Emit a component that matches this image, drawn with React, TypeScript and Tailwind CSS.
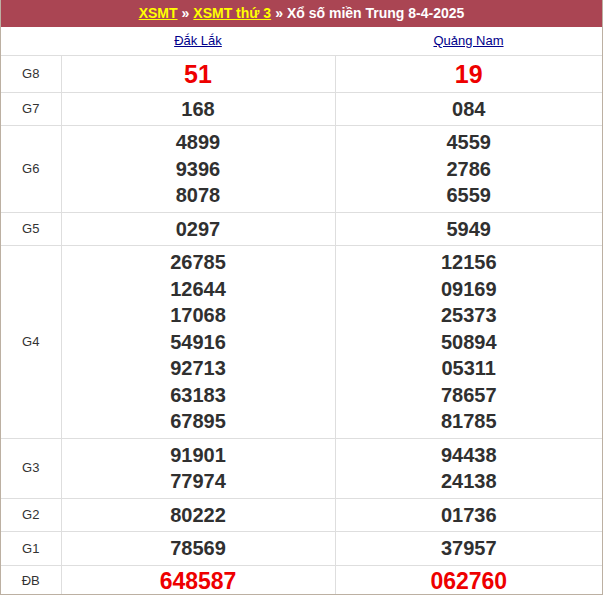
const rows: { g: string; a: string[]; b: string[]; red?: boolean; size?: string }[] = [
  { g: "G8", a: ["51"], b: ["19"], red: true, size: "text-[25px] leading-[30px] py-[3px]" },
  { g: "G7", a: ["168"], b: ["084"] },
  { g: "G6", a: ["4899", "9396", "8078"], b: ["4559", "2786", "6559"] },
  { g: "G5", a: ["0297"], b: ["5949"] },
  {
    g: "G4",
    a: ["26785", "12644", "17068", "54916", "92713", "63183", "67895"],
    b: ["12156", "09169", "25373", "50894", "05311", "78657", "81785"],
  },
  { g: "G3", a: ["91901", "77974"], b: ["94438", "24138"] },
  { g: "G2", a: ["80222"], b: ["01736"] },
  { g: "G1", a: ["78569"], b: ["37957"] },
  { g: "ĐB", a: ["648587"], b: ["062760"], red: true, size: "text-[23px] leading-[26px] py-[2px]" },
];

export default function App() {
  return (
    <div className="w-[603px] h-[595px] bg-white font-[Liberation_Sans,Arial,sans-serif] border-x border-b border-[#bcb0a2] overflow-hidden">
      <div className="h-[27px] bg-[#aa4553] flex items-center justify-center text-white font-bold text-[14px]">
        <span className="text-[#ffff00] underline">XSMT</span>
        <span className="mx-1">»</span>
        <span className="text-[#ffff00] underline">XSMT thứ 3</span>
        <span className="mx-1">»</span>
        <span>Xổ số miền Trung 8-4-2025</span>
      </div>
      <table className="w-full border-collapse table-fixed">
        <colgroup>
          <col className="w-[60px]" />
          <col className="w-[274px]" />
          <col />
        </colgroup>
        <tbody>
          <tr className="h-[28px] border-b border-[#dedede]">
            <td></td>
            <td className="text-center text-[13px] text-[#00008b] underline">Đắk Lắk</td>
            <td className="text-center text-[13px] text-[#00008b] underline">Quảng Nam</td>
          </tr>
          {rows.map((r) => (
            <tr key={r.g} className="border-b border-[#dedede] last:border-b-0">
              <td className="text-center text-[13px] text-[#333] border-r border-[#dedede]">{r.g}</td>
              {[r.a, r.b].map((col, i) => (
                <td
                  key={i}
                  className={`text-center font-bold ${i === 0 ? "border-r border-[#dedede]" : ""} ${
                    r.red ? "text-[#ee0000]" : "text-[#303030]"
                  } ${r.size ?? "text-[20px] leading-[26.5px] py-[3px]"}`}
                >
                  {col.map((n) => (
                    <div key={n}>{n}</div>
                  ))}
                </td>
              ))}
            </tr>
          ))}
        </tbody>
      </table>
    </div>
  );
}
